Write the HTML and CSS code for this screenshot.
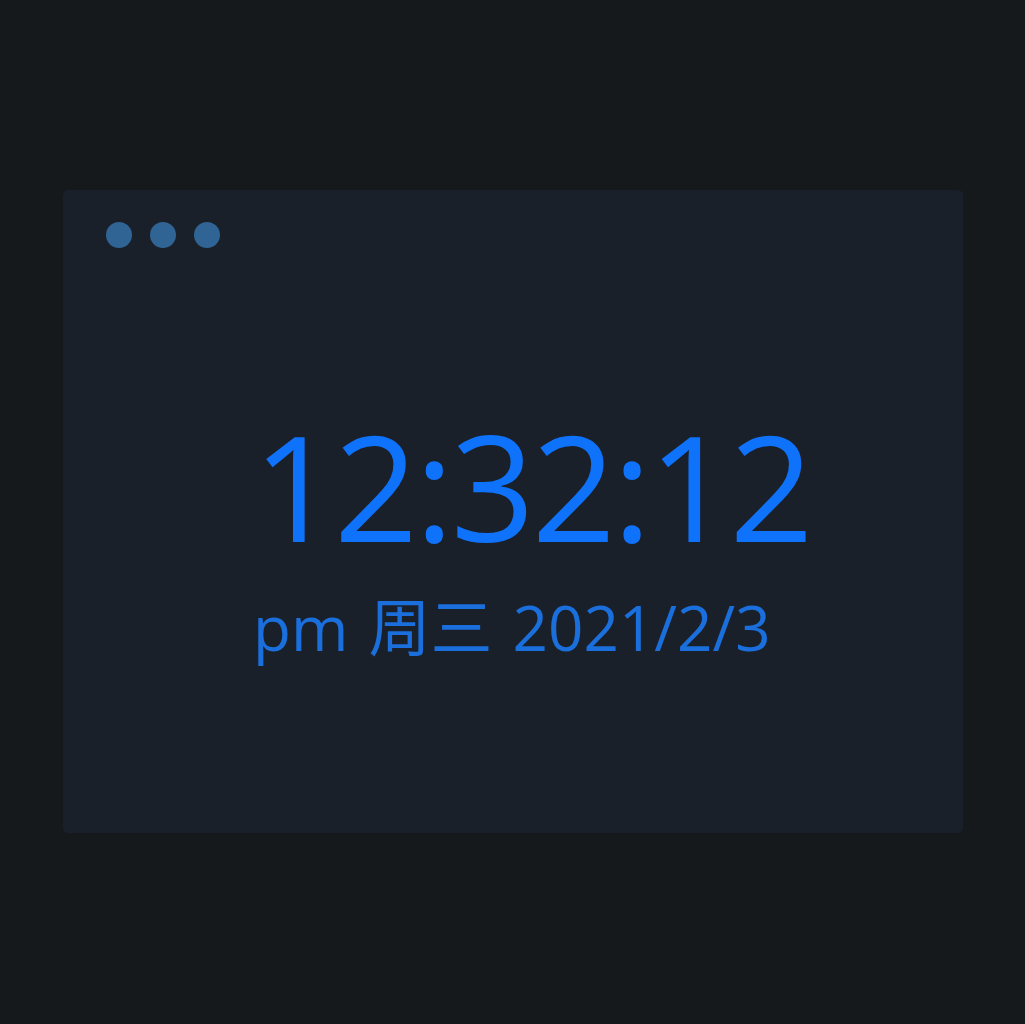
FILE: index.html
```html
<!DOCTYPE html>
<html lang="zh-CN">
<head>
<meta charset="utf-8">
<title>Clock</title>
<link rel="stylesheet" href="styles.css">
</head>
<body>
<div class="page">
  <div class="card">
    <div class="dots">
      <span class="dot"></span>
      <span class="dot"></span>
      <span class="dot"></span>
    </div>
    <div class="clock">
      <div class="time">12:32:12</div>
      <div class="date">pm 周三 2021/2/3</div>
    </div>
  </div>
</div>
</body>
</html>
```
FILE: styles.css
```css
html, body {
  margin: 0;
  padding: 0;
  background: #16191c;
}
.page {
  min-height: 1024px;
  box-sizing: border-box;
  padding: 190px 0 0 63px;
  font-family: "Open Sans", "Noto Sans CJK SC", sans-serif;
}
.card {
  width: 900px;
  height: 643px;
  box-sizing: border-box;
  background: #1a2029;
  border-radius: 5px;
  padding: 32px 0 0 43px;
}
.dots {
  display: flex;
  gap: 18px;
}
.dot {
  width: 26px;
  height: 26px;
  border-radius: 50%;
  background: #2f6494;
}
.clock {
  padding: 157px 0 0 147px;
}
.time {
  font-size: 147px;
  line-height: 160px;
  color: #0f72fb;
  letter-spacing: -3px;
}
.date {
  margin-top: 22px;
  font-size: 62px;
  line-height: 80px;
  color: #1a6fdc;
  word-spacing: 4px;
}
```
